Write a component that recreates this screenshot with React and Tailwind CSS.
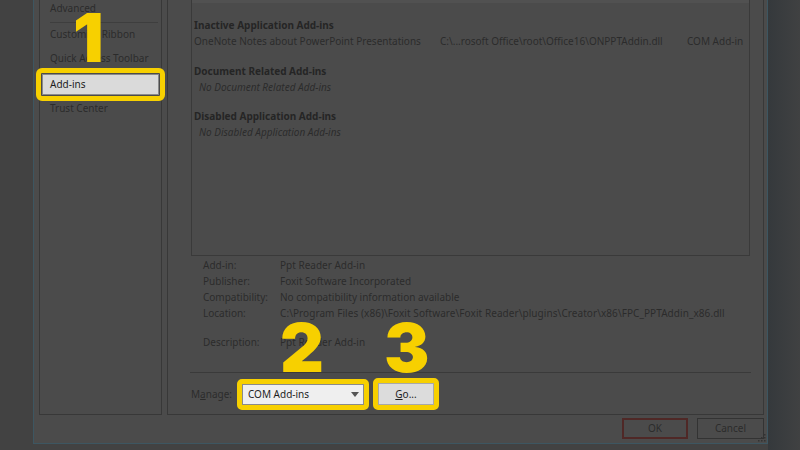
import React from 'react'

const Nav = () => {
  return (
    <div className="h-full w-[123px] shrink-0 border-x border-b border-[#383838]">
      <div className="h-[16px] pl-[10px] leading-[16px]">Advanced</div>
      <div className="mt-[6px] ml-[10px] mr-[3px] h-px bg-[#3e3e3e]" />
      <div className="h-[23px] pl-[10px] leading-[23px]">Customize Ribbon</div>
      <div className="h-[25px] pl-[10px] leading-[25px]">Quick Access Toolbar</div>
      <div className="relative mx-[2px] mt-[3px] h-[21px]">
        <div className="h-full border border-[#8a8a8a] bg-[#dadada] pl-[7px] leading-[19px] text-[#1c1c1c]">Add-ins</div>
        <span className="absolute -inset-[6px] rounded-[6px] border-[5px] border-[#f7d000]" />
      </div>
      <div className="h-[26px] pl-[10px] leading-[26px]">Trust Center</div>
    </div>
  )
}

const ListBox = () => {
  return (
    <div className="ml-[23px] h-[256px] w-[559px] border-x border-b border-[#3a3a3a]">
      <div className="h-[3px] bg-[#515151]" />
      <div className="mt-[14px] pl-[2px] leading-[16px]">
        <div className="font-bold text-[#252525]">Inactive Application Add-ins</div>
        <div className="grid grid-cols-[246px_247px_auto] whitespace-nowrap">
          <span>OneNote Notes about PowerPoint Presentations</span>
          <span>C:\...rosoft Office\root\Office16\ONPPTAddin.dll</span>
          <span>COM Add-in</span>
        </div>
        <div className="mt-[14px] font-bold text-[#252525]">Document Related Add-ins</div>
        <div className="pl-[5px] italic">No Document Related Add-ins</div>
        <div className="mt-[13px] font-bold text-[#252525]">Disabled Application Add-ins</div>
        <div className="pl-[5px] italic">No Disabled Application Add-ins</div>
      </div>
    </div>
  )
}

const details = [
  ['Add-in:', 'Ppt Reader Add-in'],
  ['Publisher:', 'Foxit Software Incorporated'],
  ['Compatibility:', 'No compatibility information available'],
  ['Location:', 'C:\\Program Files (x86)\\Foxit Software\\Foxit Reader\\plugins\\Creator\\x86\\FPC_PPTAddin_x86.dll'],
]

const Main = () => {
  return (
    <div className="flex h-full w-[597px] shrink-0 flex-col border-x border-b border-[#383838]">
      <ListBox />
      <div className="mt-[1px] grid grid-cols-[77px_1fr] pl-[35px] leading-[16px] whitespace-nowrap">
        {details.map(([k, v]) => (
          <React.Fragment key={k}>
            <span>{k}</span>
            <span className={k === 'Location:' ? 'tracking-[0.07px]' : ''}>{v}</span>
          </React.Fragment>
        ))}
        <span className="mt-[13px]">Description:</span>
        <span className="mt-[13px]">Ppt Reader Add-in</span>
      </div>
      <div className="mt-[22px] ml-[22px] h-px w-[561px] bg-[#3a3a3a]" />
      <div className="mt-[10px] ml-[23px] flex items-center">
        <span className="w-[51px]">M<u>a</u>nage:</span>
        <div className="relative h-[21px] w-[122px]">
          <div className="flex h-full items-center justify-between border border-[#8a8a8a] bg-[#efefef] pl-[5px] pr-[4px] text-[#1e1e1e]">
            <span>COM Add-ins</span>
            <svg width="8" height="5" viewBox="0 0 8 5"><path d="M0 0h8L4 5z" fill="#555" /></svg>
          </div>
          <span className="absolute -inset-[5px] rounded-[5px] border-[5px] border-[#f7d000]" />
        </div>
        <div className="relative ml-[14px] h-[22px] w-[56px]">
          <div className="flex h-full items-center justify-center border border-[#a8a8a8] bg-[#dcdcdc] text-[#1e1e1e]">
            <span><u>G</u>o...</span>
          </div>
          <span className="absolute -inset-[5px] rounded-[5px] border-[5px] border-[#f7d000]" />
        </div>
      </div>
    </div>
  )
}

const Footer = () => {
  return (
    <div className="mt-[3px] flex h-[21px] justify-end gap-[9px]">
      <div className="flex w-[66px] items-center justify-center border-2 border-[#4f2826]">OK</div>
      <div className="flex w-[67px] items-center justify-center border border-[#333333]">Cancel</div>
    </div>
  )
}

const App = () => {
  return (
    <div className="relative flex h-[450px] w-[800px] overflow-hidden bg-[#424242] font-['Noto_Sans',sans-serif] text-[10px] text-[#2b2b2b]">
      <div className="w-[33px] shrink-0" />
      <div className="relative flex h-[444px] w-[735px] shrink-0 flex-col border-x border-b border-[#3d5661] bg-[#4b4b4b] pl-[5px] pr-[3px]">
        <div className="flex h-[415px] gap-[5px]">
          <Nav />
          <Main />
        </div>
        <Footer />
        <svg className="absolute right-[1px] bottom-[1px]" width="8" height="8" viewBox="0 0 8 8">
          <g fill="#333">
            <rect x="6" y="0" width="1.5" height="1.5" />
            <rect x="3" y="3" width="1.5" height="1.5" />
            <rect x="6" y="3" width="1.5" height="1.5" />
            <rect x="0" y="6" width="1.5" height="1.5" />
            <rect x="3" y="6" width="1.5" height="1.5" />
            <rect x="6" y="6" width="1.5" height="1.5" />
          </g>
        </svg>
      </div>
      <div className="flex-1 bg-gradient-to-r from-[#35393c] to-[#404142]" />
      <span className="absolute top-[3px] left-[73px] font-['Inter',sans-serif] text-[68px] leading-none font-black text-[#f7d000]">1</span>
      <span className="absolute top-[313px] left-[280px] font-['Inter',sans-serif] text-[68px] leading-none font-black text-[#f7d000]">2</span>
      <span className="absolute top-[313px] left-[384px] font-['Inter',sans-serif] text-[68px] leading-none font-black text-[#f7d000]">3</span>
    </div>
  )
}

export default App
